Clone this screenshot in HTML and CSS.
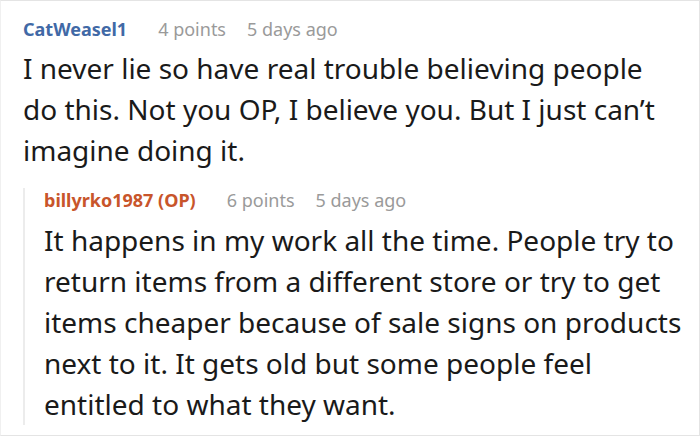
FILE: index.html
```html
<!DOCTYPE html>
<html>
<head>
<meta charset="utf-8">
<link rel="stylesheet" href="styles.css">
</head>
<body>
<div class="frame">
  <div class="comment">
    <div class="meta">
      <span class="user">CatWeasel1</span>
      <span class="info">4 points</span>
      <span class="info">5 days ago</span>
    </div>
    <p class="text">I never lie so have real trouble believing people do this. Not you OP, I believe you. But I just can’t imagine doing it.</p>
    <div class="reply">
      <div class="meta">
        <span class="user op">billyrko1987 (OP)</span>
        <span class="info">6 points</span>
        <span class="info">5 days ago</span>
      </div>
      <p class="text">It happens in my work all the time. People try to return items from a different store or try to get items cheaper because of sale signs on products next to it. It gets old but some people feel entitled to what they want.</p>
    </div>
  </div>
</div>
</body>
</html>
```
FILE: styles.css
```css
html, body {
  margin: 0;
  padding: 0;
  background: #fff;
}
body {
  width: 700px;
  height: 436px;
  overflow: hidden;
  font-family: "Noto Sans", sans-serif;
}
.frame {
  box-sizing: border-box;
  width: 700px;
  height: 436px;
  border: 1px solid #e4e4e4;
  border-left-color: #f0f0f0;
  padding: 16px 21px 0 22px;
}
.meta {
  display: flex;
  gap: 21px;
  font-size: 18px;
  line-height: 24px;
  align-items: baseline;
}
.user {
  font-weight: 700;
  color: #4169a6;
  margin-right: 10px;
}
.user.op {
  color: #c8552b;
}
.info {
  color: #9a9a9a;
}
.text {
  margin: 7px 0 0;
  font-size: 28px;
  line-height: 41px;
  color: #1a1a1a;
}
.reply {
  margin-top: 28px;
  margin-right: -8px;
  border-left: 2px solid #ececec;
  padding-left: 19px;
}
.reply .meta {
  margin-top: -11px;
}
.reply .text {
  margin-top: 8px;
}
```
